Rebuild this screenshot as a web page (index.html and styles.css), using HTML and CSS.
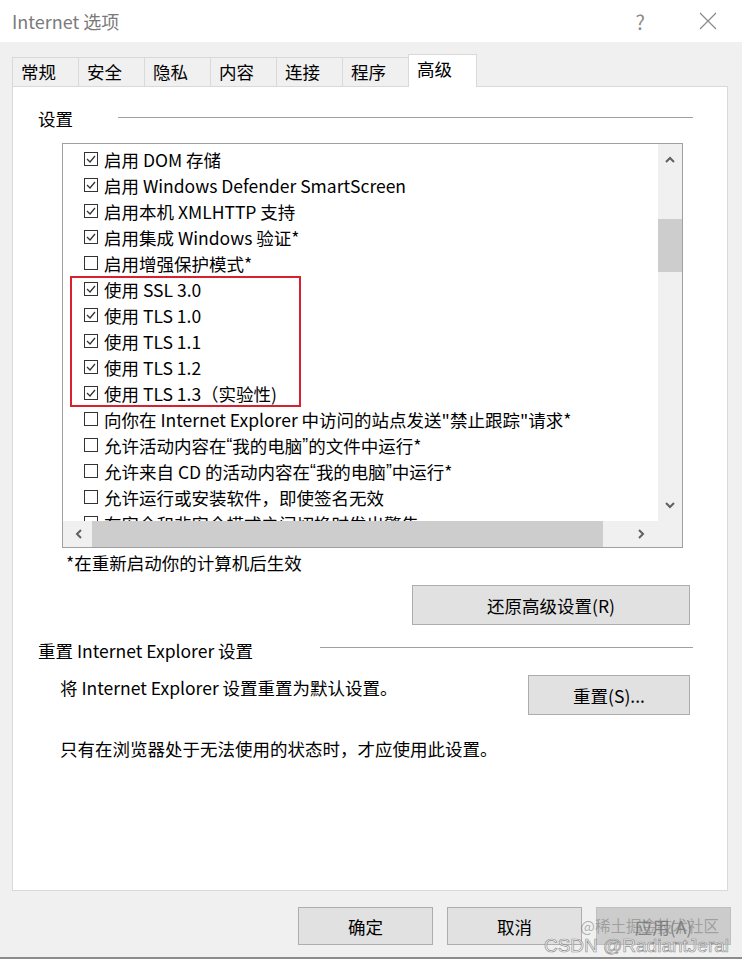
FILE: index.html
```html
<!DOCTYPE html>
<html>
<head>
  <title>Internet 选项</title>
  <link rel="stylesheet" href="styles.css">
</head>
<body>
  <div class="titlebar">
    <span class="title">Internet 选项</span>
    <span class="help">?</span>
    <svg class="close" width="18" height="18" viewBox="0 0 18 18">
      <path d="M1 1 L17 17 M17 1 L1 17" stroke="#8a8a8a" stroke-width="1.2" fill="none"/>
    </svg>
  </div>

  <div class="main">
    <div class="tabs">
      <div class="tab">常规</div>
      <div class="tab">安全</div>
      <div class="tab">隐私</div>
      <div class="tab">内容</div>
      <div class="tab">连接</div>
      <div class="tab">程序</div>
      <div class="tab active">高级</div>
    </div>

    <div class="panel">
      <div class="group-head">
        <span>设置</span>
        <div class="rule rule-settings"></div>
      </div>

      <div class="listbox">
        <div class="list-main">
          <div class="list-items">
            <div class="row"><svg class="check" viewBox="0 0 14 14"><rect x="0.5" y="0.5" width="13" height="13"/><path d="M3 7 L6 10 L11 4"/></svg>启用 DOM 存储</div>
            <div class="row"><svg class="check" viewBox="0 0 14 14"><rect x="0.5" y="0.5" width="13" height="13"/><path d="M3 7 L6 10 L11 4"/></svg>启用 Windows Defender SmartScreen</div>
            <div class="row"><svg class="check" viewBox="0 0 14 14"><rect x="0.5" y="0.5" width="13" height="13"/><path d="M3 7 L6 10 L11 4"/></svg>启用本机 XMLHTTP 支持</div>
            <div class="row"><svg class="check" viewBox="0 0 14 14"><rect x="0.5" y="0.5" width="13" height="13"/><path d="M3 7 L6 10 L11 4"/></svg>启用集成 Windows 验证*</div>
            <div class="row"><svg class="check" viewBox="0 0 14 14"><rect x="0.5" y="0.5" width="13" height="13"/></svg>启用增强保护模式*</div>
            <div class="highlight">
              <div class="row"><svg class="check" viewBox="0 0 14 14"><rect x="0.5" y="0.5" width="13" height="13"/><path d="M3 7 L6 10 L11 4"/></svg>使用 SSL 3.0</div>
              <div class="row"><svg class="check" viewBox="0 0 14 14"><rect x="0.5" y="0.5" width="13" height="13"/><path d="M3 7 L6 10 L11 4"/></svg>使用 TLS 1.0</div>
              <div class="row"><svg class="check" viewBox="0 0 14 14"><rect x="0.5" y="0.5" width="13" height="13"/><path d="M3 7 L6 10 L11 4"/></svg>使用 TLS 1.1</div>
              <div class="row"><svg class="check" viewBox="0 0 14 14"><rect x="0.5" y="0.5" width="13" height="13"/><path d="M3 7 L6 10 L11 4"/></svg>使用 TLS 1.2</div>
              <div class="row"><svg class="check" viewBox="0 0 14 14"><rect x="0.5" y="0.5" width="13" height="13"/><path d="M3 7 L6 10 L11 4"/></svg>使用 TLS 1.3（实验性)</div>
            </div>
            <div class="row"><svg class="check" viewBox="0 0 14 14"><rect x="0.5" y="0.5" width="13" height="13"/></svg>向你在 Internet Explorer 中访问的站点发送"禁止跟踪"请求*</div>
            <div class="row"><svg class="check" viewBox="0 0 14 14"><rect x="0.5" y="0.5" width="13" height="13"/></svg>允许活动内容在<span class="q">“</span>我的电脑<span class="q">”</span>的文件中运行*</div>
            <div class="row"><svg class="check" viewBox="0 0 14 14"><rect x="0.5" y="0.5" width="13" height="13"/></svg>允许来自 CD 的活动内容在<span class="q">“</span>我的电脑<span class="q">”</span>中运行*</div>
            <div class="row"><svg class="check" viewBox="0 0 14 14"><rect x="0.5" y="0.5" width="13" height="13"/></svg>允许运行或安装软件，即使签名无效</div>
            <div class="row"><svg class="check" viewBox="0 0 14 14"><rect x="0.5" y="0.5" width="13" height="13"/></svg>在安全和非安全模式之间切换时发出警告</div>
          </div>
          <div class="vscroll">
            <svg class="arrow" viewBox="0 0 12 12"><path d="M2 8 L6 4 L10 8"/></svg>
            <div class="vthumb"></div>
            <div class="spacer"></div>
            <svg class="arrow" viewBox="0 0 12 12"><path d="M2 4 L6 8 L10 4"/></svg>
          </div>
        </div>
        <div class="hscroll">
          <svg class="arrow" viewBox="0 0 12 12"><path d="M8 2 L4 6 L8 10"/></svg>
          <div class="hthumb"></div>
          <div class="spacer"></div>
          <svg class="arrow" viewBox="0 0 12 12"><path d="M4 2 L8 6 L4 10"/></svg>
          <div class="corner"></div>
        </div>
      </div>

      <p class="note">*在重新启动你的计算机后生效</p>
      <div class="btn-row">
        <button class="button wide">还原高级设置(R)</button>
      </div>

      <div class="group-head reset-head">
        <span>重置 Internet Explorer 设置</span>
        <div class="rule rule-reset"></div>
      </div>
      <div class="reset-row">
        <span>将 Internet Explorer 设置重置为默认设置。</span>
        <button class="button">重置(S)...</button>
      </div>
      <p class="hint">只有在浏览器处于无法使用的状态时，才应使用此设置。</p>
    </div>

    <div class="footer">
      <button class="button dlg">确定</button>
      <button class="button dlg">取消</button>
      <button class="button dlg disabled">应用(A)</button>
    </div>
    <div class="watermark">
      <span class="wm-top">@稀土掘金技术社区</span>
      <span class="wm-bottom">CSDN @RadiantJeral</span>
    </div>
  </div>
</body>
</html>
```

FILE: styles.css
```css
/* Internet Options dialog */
body {
  margin: 0;
  width: 742px;
  height: 959px;
  overflow: hidden;
  font-family: "Noto Sans CJK SC", "Noto Sans", sans-serif;
  font-size: 17.5px;
  color: #000;
  background-color: #f0f0f0;
  border-bottom: 2px solid #8c8c8c;
  box-sizing: border-box;
}

.titlebar {
  height: 42px;
  background-color: #fff;
  display: flex;
  align-items: center;
  padding-left: 12px;
}

.title {
  font-size: 18px;
  color: #7a7a7a;
  flex: 1;
}

.help {
  font-size: 20px;
  color: #8a8a8a;
  margin-right: 54px;
}

.close {
  margin-right: 25px;
}

.main {
  padding: 12px 14px 0 12px;
  position: relative;
}

/* tabs */
.tabs {
  display: flex;
  align-items: flex-end;
  height: 32px;
}

.tab {
  width: 66px;
  height: 29px;
  box-sizing: border-box;
  padding-left: 8px;
  border: 1px solid #d9d9d9;
  border-bottom: none;
  border-right: none;
  line-height: 28px;
  background-color: #f0f0f0;
}

.tab.active {
  width: 69px;
  height: 33px;
  margin-bottom: -1px;
  background-color: #fff;
  border-right: 1px solid #d9d9d9;
  line-height: 28px;
  position: relative;
  z-index: 1;
}

.panel {
  background-color: #fff;
  border: 1px solid #d9d9d9;
  height: 805px;
  box-sizing: border-box;
  padding: 18px 37px 0 25px;
}

.group-head {
  display: flex;
  align-items: center;
  height: 26px;
}

.rule {
  flex: 1;
  height: 1px;
  background-color: #a0a0a0;
  margin-right: -3px;
}

.rule-settings {
  margin-left: 45px;
  margin-top: -2px;
}

.rule-reset {
  margin-left: 67px;
  margin-top: -6px;
}

/* settings list */
.listbox {
  width: 621px;
  height: 405px;
  margin: 12px 0 0 24px;
  border: 1px solid #a0a0a0;
  box-sizing: border-box;
  display: flex;
  flex-direction: column;
}

.list-main {
  flex: 1;
  display: flex;
  overflow: hidden;
}

.list-items {
  flex: 1;
  padding: 2px 0 0 21px;
  overflow: hidden;
}

.row {
  height: 26px;
  display: flex;
  align-items: center;
  white-space: nowrap;
}

.q {
  font-family: "Liberation Sans", sans-serif;
}

.check {
  width: 14px;
  height: 14px;
  margin-right: 6px;
  flex-shrink: 0;
}

.check rect {
  fill: #fff;
  stroke: #333;
  stroke-width: 1;
}

.check path {
  fill: none;
  stroke: #333;
  stroke-width: 1.3;
}

.highlight {
  position: relative;
}

.highlight::before {
  content: "";
  position: absolute;
  left: -14px;
  top: 0;
  width: 231px;
  height: 131px;
  border: 2px solid #d7212e;
  box-sizing: border-box;
}

.vscroll {
  width: 24px;
  background-color: #f0f0f0;
  display: flex;
  flex-direction: column;
  align-items: center;
}

.arrow {
  width: 12px;
  height: 12px;
  flex-shrink: 0;
}

.arrow path {
  fill: none;
  stroke: #606060;
  stroke-width: 2;
}

.vscroll .arrow {
  margin: 10px 0;
}

.vthumb {
  width: 24px;
  height: 53px;
  background-color: #cdcdcd;
  margin-top: 43px;
}

.spacer {
  flex: 1;
}

.hscroll {
  height: 26px;
  background-color: #f0f0f0;
  display: flex;
  align-items: center;
  padding-left: 4px;
}

.hscroll .arrow {
  margin: 0 6px;
}

.hthumb {
  width: 511px;
  height: 26px;
  background-color: #cdcdcd;
  margin-left: 1px;
}

.corner {
  width: 25px;
  height: 26px;
  background-color: #f0f0f0;
  margin-left: 4px;
}

.note {
  margin: 2px 0 0 28px;
  line-height: 26px;
}

.btn-row {
  display: flex;
  justify-content: flex-end;
  margin-top: 9px;
}

.button {
  font-family: inherit;
  font-size: 17.5px;
  color: #000;
  height: 40px;
  width: 162px;
  background-color: #e1e1e1;
  border: 1px solid #adadad;
  padding: 0;
}

.button.wide {
  width: 278px;
}

.reset-head {
  margin-top: 12px;
}

.reset-row {
  display: flex;
  justify-content: space-between;
  margin-top: 12px;
  padding-left: 22px;
}

.reset-row span {
  line-height: 26px;
}

.hint {
  margin: 21px 0 0 22px;
  line-height: 26px;
}

/* dialog buttons */
.footer {
  display: flex;
  justify-content: flex-end;
  gap: 14px;
  margin-top: 16px;
  margin-right: -3px;
}

.button.dlg {
  width: 135px;
  height: 38px;
}

.button.disabled {
  background-color: #cccccc;
  border-color: #bfbfbf;
  color: #838383;
}

/* CSDN watermark over the bottom-right corner */
.watermark {
  position: absolute;
  right: 13px;
  top: 873px;
  display: flex;
  flex-direction: column;
  align-items: flex-end;
  pointer-events: none;
}

.wm-top {
  font-size: 15.5px;
  color: rgba(120, 120, 120, 0.55);
  margin-right: 10px;
  line-height: 20px;
}

.wm-bottom {
  font-family: "Liberation Sans", sans-serif;
  font-size: 19px;
  color: rgba(255, 255, 255, 0.7);
  -webkit-text-stroke: 0.7px rgba(110, 110, 110, 0.75);
  line-height: 22px;
}
```
